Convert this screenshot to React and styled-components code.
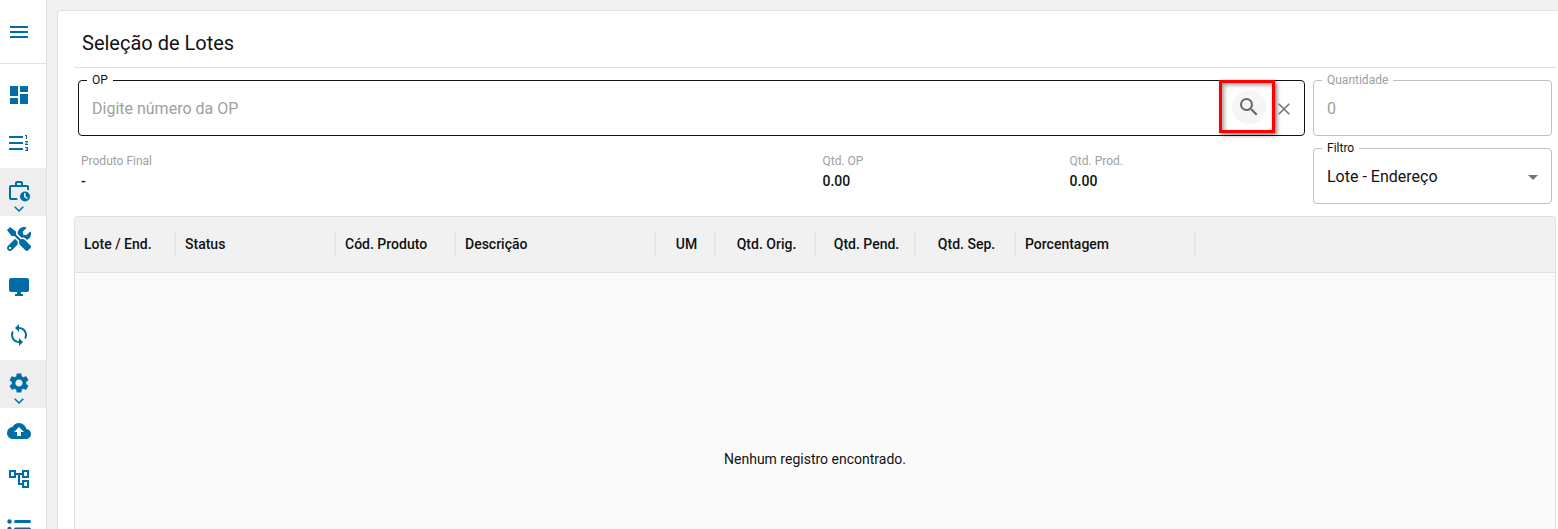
import React, { useState } from 'react';
import styled, { createGlobalStyle } from 'styled-components';
import {
  MdMenu,
  MdDashboard,
  MdFormatListNumberedRtl,
  MdSync,
  MdSettings,
  MdBackup,
  MdOutlineAccountTree,
  MdSearch,
  MdArrowDropDown,
} from 'react-icons/md';
import { FaTools } from 'react-icons/fa';

const GlobalStyle = createGlobalStyle`
  * {
    box-sizing: border-box;
  }
  body {
    margin: 0;
    overflow: hidden;
    background: #f1f1f1;
    color: #121212;
    font-family: Roboto, "Liberation Sans", sans-serif;
    font-size: 14px;
  }
`;

const Layout = styled.div`
  display: flex;
  height: 100vh;
`;

const Sidebar = styled.nav`
  display: flex;
  flex-direction: column;
  flex: 0 0 47px;
  overflow: hidden;
  background: #fff;
  border-right: 1px solid #e0e0e0;
`;

const MenuHeader = styled.div`
  display: flex;
  flex: 0 0 64px;
  border-bottom: 1px solid #e0e0e0;
  margin-bottom: 8px;
`;

const NavButton = styled.button`
  display: flex;
  flex: 0 0 48px;
  flex-direction: column;
  align-items: center;
  gap: 3px;
  width: 100%;
  padding: 11px 8px 0 0;
  border: 0;
  background: ${({ $active }) => ($active ? '#eeeeee' : 'transparent')};
  color: #006ea6;
  cursor: pointer;
  svg {
    display: block;
    flex-shrink: 0;
  }
`;

const MenuButton = styled(NavButton)`
  flex: 1;
  justify-content: center;
  padding-top: 0;
`;

const Main = styled.main`
  display: flex;
  flex: 1;
  min-width: 0;
  padding: 10px 0 0 10px;
`;

const Card = styled.section`
  display: flex;
  flex: 1;
  flex-direction: column;
  min-width: 0;
  padding: 0 2px 0 16px;
  background: #fff;
  border: 1px solid #e0e0e0;
  border-width: 1px 0 0 1px;
  border-radius: 4px 0 0 0;
`;

const Title = styled.h1`
  margin: 0;
  padding: 18px 8px 10px;
  border-bottom: 1px solid #e0e0e0;
  font-size: 20px;
  font-weight: 400;
  line-height: 28px;
`;

const Form = styled.form`
  display: grid;
  grid-template-columns: minmax(0, 1fr) 239px;
  gap: 4px 8px;
  padding: 4px 4px 12px;
`;

const Field = styled.fieldset`
  display: flex;
  align-items: center;
  min-width: 0;
  height: 64px;
  margin: 0;
  padding: 0 6px 6px 8px;
  border: 1px solid ${({ $focused }) => ($focused ? '#121212' : '#c0c0c0')};
  border-radius: 4px;
  color: ${({ $disabled }) => ($disabled ? '#9e9e9e' : '#121212')};
`;

const Legend = styled.legend`
  padding: 0 5px;
  font-size: 12px;
  line-height: 16px;
`;

const TextInput = styled.input`
  flex: 1;
  min-width: 0;
  padding: 0 5px;
  border: 0;
  outline: 0;
  background: transparent;
  color: inherit;
  font: 16px/24px Roboto, sans-serif;
  &::placeholder {
    color: #a0a0a0;
    opacity: 1;
  }
`;

const SelectBox = styled.div`
  display: grid;
  flex: 1;
  align-items: center;
  svg {
    grid-area: 1 / 1;
    justify-self: end;
    color: #757575;
    pointer-events: none;
  }
`;

const Select = styled.select`
  grid-area: 1 / 1;
  appearance: none;
  padding: 0 5px;
  border: 0;
  outline: 0;
  background: transparent;
  color: inherit;
  font: 16px/24px Roboto, sans-serif;
`;

const Highlight = styled.div`
  display: flex;
  align-items: center;
  justify-content: flex-end;
  width: 56px;
  height: 53px;
  margin-bottom: 4px;
  padding-right: 6px;
  border: 3px solid #fe0000;
  box-shadow: 2px 2px 4px rgba(0, 0, 0, 0.5), inset 2px 2px 4px rgba(0, 0, 0, 0.4);
`;

const IconButton = styled.button`
  display: flex;
  align-items: center;
  justify-content: center;
  padding: 0;
  border: 0;
  border-radius: 50%;
  background: transparent;
  color: #757575;
  cursor: pointer;
`;

const SearchButton = styled(IconButton)`
  width: 34px;
  height: 34px;
  background: #f5f5f5;
  color: #666;
`;

const ClearButton = styled(IconButton)`
  width: 18px;
  height: 18px;
  margin-right: 5px;
`;

const Summary = styled.dl`
  display: grid;
  grid-template-columns: 63fr 21fr 20fr;
  margin: 0;
  padding: 11px 0 0 3px;
`;

const SummaryLabel = styled.dt`
  color: #a0a0a0;
  font-size: 12px;
  line-height: 20px;
`;

const SummaryValue = styled.dd`
  margin: 0;
  font-weight: 500;
  line-height: 20px;
`;

const Grid = styled.div`
  display: flex;
  flex: 1;
  flex-direction: column;
  overflow: hidden;
  background: #fafafa;
  border: 1px solid #e0e0e0;
  border-bottom: 0;
  border-radius: 4px 4px 0 0;
`;

const Table = styled.table`
  width: 100%;
  table-layout: fixed;
  border-collapse: collapse;
  background: #f1f1f1;
  border-bottom: 1px solid #e0e0e0;
`;

const HeaderCell = styled.th`
  width: ${({ $width }) => $width}px;
  height: 55px;
  padding: 0;
  font-weight: 500;
  text-align: ${({ $align }) => $align || 'left'};
`;

const HeaderLabel = styled.div`
  padding: 0 6px 0 9px;
  border-right: 2px solid #e6e6e6;
  line-height: 24px;
  white-space: nowrap;
`;

const Empty = styled.p`
  margin: 176px 0 0;
  line-height: 20px;
  text-align: center;
`;

const BriefcaseClock = () => (
  <svg width="24" height="24" viewBox="0 0 24 24" fill="currentColor" aria-hidden="true">
    <path d="M10 2h4a2 2 0 0 1 2 2v2h4a2 2 0 0 1 2 2v3.500a7 7 0 0 0-2-1.100V8H4v11h6.100c.1.7.3 1.400.6 2H4a2 2 0 0 1-2-2V8c0-1.100.9-2 2-2h4V4c0-1.100.9-2 2-2zm4 4V4h-4v2z" />
    <path fillRule="evenodd" d="M18 12.500a5 5 0 1 1 0 10 5 5 0 0 1 0-10zM17 14v4l3 2 1-1-2.500-1.700V14z" />
  </svg>
);

const Monitor = () => (
  <svg width="24" height="24" viewBox="0 0 24 24" fill="currentColor" aria-hidden="true">
    <path d="M4 3h16a2 2 0 0 1 2 2v10a2 2 0 0 1-2 2h-6v2h2v2H8v-2h2v-2H4a2 2 0 0 1-2-2V5a2 2 0 0 1 2-2z" />
  </svg>
);

const BulletList = () => (
  <svg width="24" height="24" viewBox="0 0 24 24" fill="currentColor" aria-hidden="true">
    <circle cx="2.5" cy="6.5" r="2.2" />
    <circle cx="2.5" cy="14" r="2.2" />
    <circle cx="2.5" cy="21.5" r="2.2" />
    <rect x="7" y="5" width="17" height="3" rx="1.5" />
    <rect x="7" y="12.5" width="17" height="3" rx="1.5" />
    <rect x="7" y="20" width="17" height="3" rx="1.5" />
  </svg>
);

const Chevron = () => (
  <svg width="10" height="6" viewBox="0 0 10 6" fill="none" stroke="currentColor" strokeWidth="1.5" aria-hidden="true">
    <path d="M0.7 0.7L5 5L9.3 0.7" />
  </svg>
);

const Cross = () => (
  <svg width="12" height="12" viewBox="0 0 12 12" fill="none" stroke="currentColor" strokeWidth="1.6" aria-hidden="true">
    <path d="M0.7 0.7L11.3 11.3M11.3 0.7L0.7 11.3" />
  </svg>
);

const navItems = [
  { label: 'Painel', icon: <MdDashboard size={24} /> },
  { label: 'Ordens', icon: <MdFormatListNumberedRtl size={24} /> },
  { label: 'Apontamentos', icon: <BriefcaseClock />, open: true },
  { label: 'Ferramentas', icon: <FaTools size={24} /> },
  { label: 'Monitor', icon: <Monitor /> },
  { label: 'Sincronizar', icon: <MdSync size={24} /> },
  { label: 'Configurações', icon: <MdSettings size={24} />, open: true },
  { label: 'Enviar', icon: <MdBackup size={24} /> },
  { label: 'Estrutura', icon: <MdOutlineAccountTree size={24} /> },
  { label: 'Lista', icon: <BulletList /> },
];

const columns = [
  { label: 'Lote / End.', width: 101 },
  { label: 'Status', width: 160 },
  { label: 'Cód. Produto', width: 120 },
  { label: 'Descrição', width: 200 },
  { label: 'UM', width: 60, align: 'center' },
  { label: 'Qtd. Orig.', width: 100, align: 'center' },
  { label: 'Qtd. Pend.', width: 100, align: 'center' },
  { label: 'Qtd. Sep.', width: 100, align: 'center' },
  { label: 'Porcentagem', width: 180 },
];

const summary = [
  { label: 'Produto Final', value: '-' },
  { label: 'Qtd. OP', value: '0.00' },
  { label: 'Qtd. Prod.', value: '0.00' },
];

const App = () => {
  const [op, setOp] = useState('');

  return (
    <Layout>
      <GlobalStyle />
      <Sidebar>
        <MenuHeader>
          <MenuButton type="button" aria-label="Menu">
            <MdMenu size={24} />
          </MenuButton>
        </MenuHeader>
        {navItems.map(({ label, icon, open }) => (
          <NavButton key={label} type="button" aria-label={label} $active={open}>
            {icon}
            {open && <Chevron />}
          </NavButton>
        ))}
      </Sidebar>
      <Main>
        <Card>
          <Title>Seleção de Lotes</Title>
          <Form onSubmit={(e) => e.preventDefault()}>
            <Field $focused>
              <Legend><label htmlFor="op">OP</label></Legend>
              <TextInput
                id="op"
                placeholder="Digite número da OP"
                value={op}
                onChange={(e) => setOp(e.target.value)}
              />
              <Highlight>
                <SearchButton type="submit" aria-label="Pesquisar">
                  <MdSearch size={24} />
                </SearchButton>
              </Highlight>
              <ClearButton type="button" aria-label="Limpar" onClick={() => setOp('')}>
                <Cross />
              </ClearButton>
            </Field>
            <Field $disabled>
              <Legend><label htmlFor="quantidade">Quantidade</label></Legend>
              <TextInput id="quantidade" placeholder="0" disabled />
            </Field>
            <Summary>
              {summary.map(({ label, value }) => (
                <div key={label}>
                  <SummaryLabel>{label}</SummaryLabel>
                  <SummaryValue>{value}</SummaryValue>
                </div>
              ))}
            </Summary>
            <Field>
              <Legend><label htmlFor="filtro">Filtro</label></Legend>
              <SelectBox>
                <Select id="filtro">
                  <option>Lote - Endereço</option>
                </Select>
                <MdArrowDropDown size={24} />
              </SelectBox>
            </Field>
          </Form>
          <Grid>
            <Table>
              <thead>
                <tr>
                  {columns.map(({ label, width, align }) => (
                    <HeaderCell key={label} scope="col" $width={width} $align={align}>
                      <HeaderLabel>{label}</HeaderLabel>
                    </HeaderCell>
                  ))}
                  <td />
                </tr>
              </thead>
            </Table>
            <Empty>Nenhum registro encontrado.</Empty>
          </Grid>
        </Card>
      </Main>
    </Layout>
  );
};

export default App;
